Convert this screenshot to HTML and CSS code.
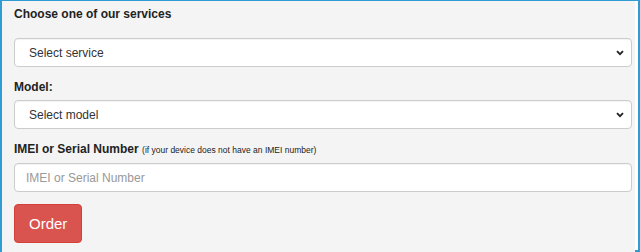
FILE: index.html
```html
<!DOCTYPE html>
<html lang="en">

<head>
  <meta charset="UTF-8">
  <meta name="viewport" content="width=device-width, initial-scale=1.0">
  <title>Order a service</title>
  <link rel="stylesheet" href="styles.css">
</head>

<body>
  <div class="frame">
    <form class="panel" id="orderForm">
      <label class="title" for="service">Choose one of our services</label>
      <select id="service" name="service" class="field select">
        <option>Select service</option>
      </select>

      <label class="label" for="model">Model:</label>
      <select id="model" name="model" class="field select">
        <option>Select model</option>
      </select>

      <label class="label" for="imei">IMEI or Serial Number <small>(if your device does not have an IMEI number)</small></label>
      <input id="imei" name="imei" class="field" type="text" placeholder="IMEI or Serial Number">

      <button type="submit" class="order">Order</button>
    </form>
  </div>
</body>

</html>
```

FILE: styles.css
```css
body {
  margin: 0;
  font-family: "Liberation Sans", Arial, sans-serif;
  color: #222;
}

.frame {
  height: 252px;
  box-sizing: border-box;
  border: 2px solid #2f9dd4;
  border-top-width: 1px;
  background-color: #fff;
}

.panel {
  height: 100%;
  margin: 0 3px 0 0;
  padding: 5px 3px 0 12px;
  background-color: #f4f4f4;
  display: flex;
  flex-direction: column;
  align-items: flex-start;
}

.title,
.label {
  display: block;
  font-size: 12px;
  line-height: 17px;
  font-weight: bold;
}

.title {
  margin-bottom: 15px;
}

.label {
  margin-top: 12px;
  margin-bottom: 4px;
}

.label small {
  font-size: 8.5px;
  font-weight: normal;
}

.field {
  width: 100%;
  height: 29px;
  box-sizing: border-box;
  margin: 0;
  border: 1px solid #ccc;
  border-radius: 4px;
  background-color: #fff;
  font-family: inherit;
  font-size: 12px;
  color: #333;
  padding: 0 11px;
  box-shadow: inset 0 1px 1px rgba(0, 0, 0, 0.05);
}

.field::placeholder {
  color: #999;
}

.select {
  appearance: none;
  -webkit-appearance: none;
  padding-left: 14px;
  background-image: url("data:image/svg+xml,%3Csvg xmlns='http://www.w3.org/2000/svg' width='8' height='6' viewBox='0 0 8 6'%3E%3Cpath d='M1 1.2l3 3 3-3' fill='none' stroke='%23222' stroke-width='1.8'/%3E%3C/svg%3E");
  background-repeat: no-repeat;
  background-position: right 7px center;
}

.order {
  margin-top: 12px;
  height: 39px;
  padding: 0 14px;
  border: 1px solid #d43f3a;
  border-radius: 4px;
  background-color: #d9534f;
  color: #fff;
  font-family: inherit;
  font-size: 15px;
  cursor: pointer;
}

.order:hover {
  background-color: #c9302c;
}
```
